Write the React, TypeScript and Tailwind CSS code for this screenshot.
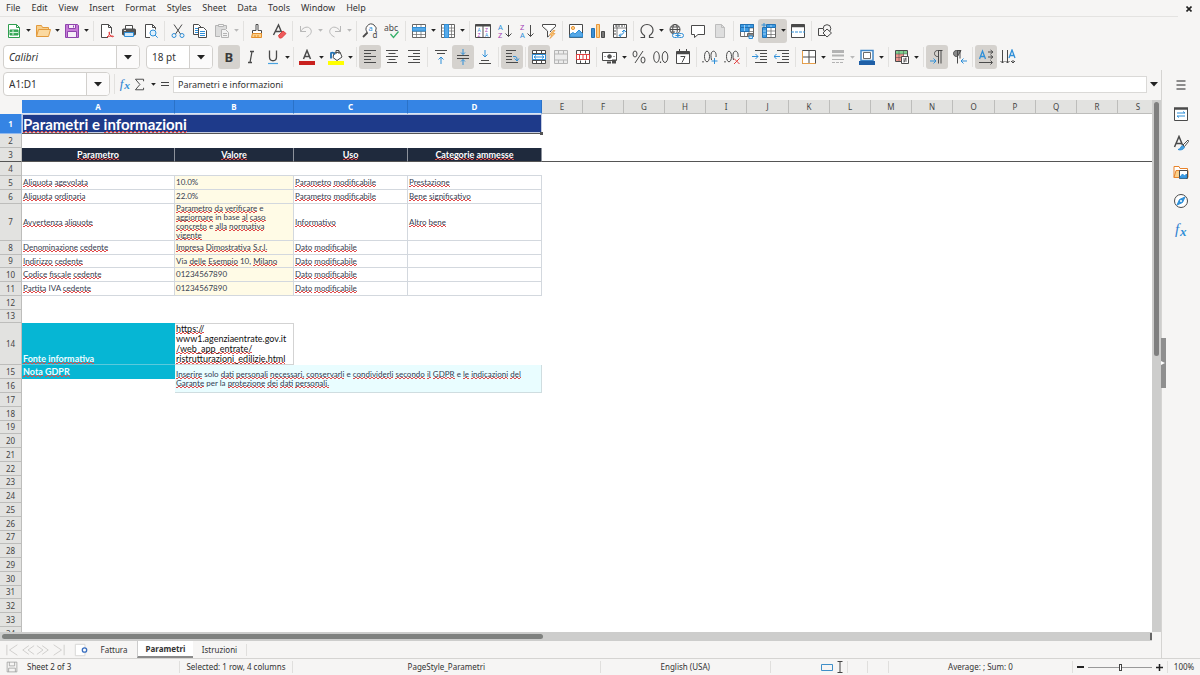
import React from "react";

const INK = "#4a4a4a";
const BLUE = "#2f8fd8";
const RED = "#e04040";

function Svg({ children, size = "size-4", stroke = INK }: { children: React.ReactNode; size?: string; stroke?: string }) {
  return (
    <svg viewBox="0 0 16 16" className={"shrink-0 " + size} fill="none" stroke={stroke} strokeWidth="1" aria-hidden="true">
      {children}
    </svg>
  );
}

function Caret({ faded = false, large = false }: { faded?: boolean; large?: boolean }) {
  return (
    <svg viewBox="0 0 8 5" className={large ? "h-[5px] w-2" : "h-[3px] w-[5px]"} fill={faded ? "#b9b9b9" : "#222"} aria-hidden="true">
      <path d="M0 0h8L4 4.6z" />
    </svg>
  );
}

function Sep({ wide = false }: { wide?: boolean }) {
  return (
    <span className={"flex shrink-0 justify-center " + (wide ? "w-[6px]" : "w-[5px]")}>
      <span className="h-5 w-px bg-[#e2e1df]" />
    </span>
  );
}

function Tool({ label, on = false, menu = false, faded = false, children }: {
  label: string; on?: boolean; menu?: boolean; faded?: boolean; children: React.ReactNode;
}) {
  return (
    <span className={"flex h-6 shrink-0 items-center rounded-[3px] " + (on ? "bg-[#d5d2ce]" : "")}>
      <button type="button" aria-label={label} aria-pressed={on} className="flex h-6 w-[22px] items-center justify-center">
        {children}
      </button>
      {menu && (
        <button type="button" aria-label={label + " menu"} className="flex h-6 w-[7px] items-center justify-center">
          <Caret faded={faded} />
        </button>
      )}
    </span>
  );
}

const page = "M3.5 1.5h6l3 3v10h-9z";
const T = ({ x, y, c, s = 7, children, i = false, b = false }: { x: number; y: number; c: string; s?: number; children: string; i?: boolean; b?: boolean }) => (
  <text x={x} y={y} fill={c} stroke="none" fontSize={s} fontFamily="Noto Sans, sans-serif" fontStyle={i ? "italic" : "normal"} fontWeight={b ? 700 : 400}>{children}</text>
);

const icons: Record<string, React.ReactNode> = {
  new: <Svg stroke="#2f9e4f"><path d="M2.500 1.500h8l3 3v10h-11z" fill="#fff" /><path d="M10.500 1.500v3h3" /><path d="M4 7h8v5H4z" fill="#3fae5f" /><path d="M4 9.500h8M7 7v5" stroke="#d5f2dc" /></Svg>,
  open: <Svg stroke="#e39a3c"><path d="M1.500 13.500v-11h5l1 2h6v2" fill="#f7cf8c" /><path d="M1.500 13.500l2-7h12l-2 7z" fill="#fbd9a0" /></Svg>,
  save: <Svg stroke="#8e44ad"><path d="M1.500 1.500h12l1 1v12h-13z" fill="#c77bd8" /><path d="M4.500 1.500h7v4h-7zM3.500 8.500h9v6h-9z" fill="#f6eef8" /><path d="M9.500 2.500v2" /></Svg>,
  pdf: <Svg><path d="M9 14.500H2.500v-13h7l3 3v6" fill="#fff" /><path d="M9.500 1.500v3h3" /><path d="M8 14c2.500-1.500 3-4.500 2.500-5s-1 1 .5 3 3 2 3.500 1.500-2-1-6.500.5z" stroke="#e23b3b" /></Svg>,
  print: <Svg><path d="M4.500 6V2.500h7V6" fill="#fff" /><rect x="1.500" y="6" width="13" height="6" rx="1" fill="#555" /><path d="M3.500 9.500h9v4h-9z" fill="#d3e9fa" stroke={BLUE} /><path d="M3 7.500h2" stroke="#ddd" /></Svg>,
  preview: <Svg><path d="M7 14.500H2.500v-13h7l3 3v2" fill="#fff" /><path d="M9.500 1.500v3h3" /><circle cx="10" cy="10" r="3" fill="#dff0fc" stroke={BLUE} /><path d="M12.200 12.200l2.500 2.500" stroke={BLUE} /></Svg>,
  cut: <Svg><path d="M4 1.500l6.500 9.500M12 1.500L5.500 11" /><circle cx="4" cy="12.500" r="2" stroke={BLUE} /><circle cx="12" cy="12.500" r="2" stroke={BLUE} /></Svg>,
  copy: <Svg><path d="M1.500 1.500h5l3 3v7h-8z" fill="#fff" /><path d="M3 5.500h4M3 7.500h4M3 9.500h4" stroke={BLUE} /><path d="M6.500 4.500h5l3 3v7h-8z" fill="#fff" /><path d="M8 8.500h5M8 10.500h5M8 12.500h5" stroke={BLUE} /></Svg>,
  paste: <Svg stroke="#b4b4b4"><path d="M6 13.500H1.500v-11h11V6" fill="#dcdcdc" /><path d="M4.500 1.500h5v2h-5z" fill="#f5f5f5" /><path d="M7.500 6.500h4l3 3v5h-7z" fill="#f3f3f3" /><path d="M9 10.500h4M9 12.500h4" /></Svg>,
  clone: <Svg><path d="M7 1.500h2v6h3.500v3h-9v-3H7z" fill="#fff" /><path d="M3.500 10.500h9v4h-10z" fill="#fbd08a" stroke="#e58e2a" /><path d="M6 14v-2M9 14v-2" stroke="#e58e2a" /></Svg>,
  clear: <Svg><path d="M2.500 12L7.500 2l3 7M4.500 8.500h5" strokeWidth="1.400" /><path d="M7.500 12.500l4.500-4.500 3 2.500-4.500 4.500h-2z" fill="#ee5b5b" stroke={RED} /></Svg>,
  undo: <Svg stroke="#b8b8b8"><path d="M2.500 3v5.500H8M2.500 8.500c3-5 8-5.500 10-2.500s0 6-4 8" /></Svg>,
  redo: <Svg stroke="#b8b8b8"><path d="M13.500 3v5.500H8M13.500 8.500c-3-5-8-5.500-10-2.500s0 6 4 8" /></Svg>,
  find: <Svg><path d="M5.500 9.500a5 5 0 1 1 8-1" fill="#fff" /><path d="M5.500 9.500L1 14" strokeWidth="1.800" /><T x={6.500} y={8} c={BLUE} s={7.500}>a</T><T x={10.500} y={15} c={INK} s={8}>d</T></Svg>,
  spell: <Svg><T x={0} y={7.500} c={INK} s={8.500}>abc</T><path d="M6.500 11l3 3.500 5-6" stroke="#35b06a" strokeWidth="1.300" /></Svg>,
  row: <Svg stroke="#666"><path d="M1.500 1.500h13v13h-13z" fill="#fff" /><path d="M5.500 1.500v13M10 1.500v13M1.500 11.500h13M1.500 8.500h13" strokeWidth=".7" /><path d="M1.500 4.500h13v3.500h-13z" fill="#56a9e8" stroke={BLUE} /></Svg>,
  col: <Svg stroke="#666"><path d="M1.500 1.500h13v13h-13z" fill="#fff" /><path d="M1.500 5h13M1.500 8h13M1.500 11.500h13M11.500 1.500v13" strokeWidth=".7" /><path d="M4.500 1.500h4v13h-4z" fill="#56a9e8" stroke={BLUE} /></Svg>,
  sort: <Svg><path d="M.5 1.500h15v13H.5zM8 1.500v13" fill="#fff" /><path d="M.5 2.500h15" strokeWidth="2" /><T x={2.500} y={8.500} c={BLUE} s={5}>A</T><T x={10} y={8.500} c="#a33fb5" s={5}>Z</T><T x={2.500} y={14} c="#a33fb5" s={5}>Z</T><T x={10} y={14} c={BLUE} s={5}>A</T></Svg>,
  asc: <Svg><T x={1} y={7} c={BLUE} s={7.500}>A</T><T x={1} y={15} c="#a33fb5" s={7.500}>Z</T><path d="M11.500 2v11.500M8.500 10.500l3 3 3-3" /></Svg>,
  desc: <Svg><T x={1} y={7} c="#a33fb5" s={7.500}>Z</T><T x={1} y={15} c={BLUE} s={7.500}>A</T><path d="M11.500 2v11.500M8.500 10.500l3 3 3-3" /></Svg>,
  filter: <Svg><path d="M1.500 1.500h13v2L9.500 8v1M1.500 1.500v2L6.500 8v6l2-1.500" fill="#fff" /><path d="M12 7.500L8.500 12h2.500L9 15.500l5-5h-2.500l2.500-3z" fill="#fbc777" stroke="#e8963a" strokeWidth=".7" /></Svg>,
  image: <Svg><path d="M1.500 1.500h13v13h-13z" fill="#fff" /><circle cx="5" cy="5" r="1.600" fill="#fbd08a" stroke="#e8963a" /><path d="M2 14v-2.500l3-2 2 1.500 4-4 3.500 3.500V14z" fill="#56a9e8" stroke={BLUE} /></Svg>,
  chart: <Svg><path d="M1.500 5.500h3v9h-3z" fill="#3b8fd4" stroke="#2272b5" /><path d="M6.500 1.500h3v13h-3z" fill="#fbd08a" stroke="#e8963a" /><path d="M11.500 8.500h3v6h-3z" fill="#777" /></Svg>,
  pivot: <Svg><path d="M1.500 1.500h13v13h-13z" fill="#fff" /><path d="M5 1.500v13M1.500 5h13" strokeWidth=".7" /><path d="M3 3h10M3 7v6" strokeDasharray="2 1" /><path d="M7 12.500c3 0 5-2 5-5M9 10.500l-2 2 2 1.500M10 9l2-2 2 2" stroke={BLUE} /></Svg>,
  omega: <Svg><path d="M1.500 14.500h4v-2C3 11 2 9.500 2 7c0-3 2.500-5.500 6-5.500S14 4 14 7c0 2.500-1 4-3.500 5.500v2h4" strokeWidth="1.200" /></Svg>,
  link: <Svg><circle cx="7" cy="6.500" r="5" /><ellipse cx="7" cy="6.500" rx="2.300" ry="5" /><path d="M2 6.500h10M3 4h8M3 9h4" /><rect x="4.500" y="10.500" width="6" height="4" rx="2" fill="#f6f5f4" stroke={BLUE} /><rect x="9.500" y="10.500" width="6" height="4" rx="2" fill="#f6f5f4" stroke={BLUE} /><path d="M7.500 12.500h5" stroke={BLUE} /></Svg>,
  comment: <Svg><path d="M1.500 2.500h13v9H8l-3.500 3v-3h-3z" fill="#fff" /></Svg>,
  header: <Svg stroke="#bdbdbd"><path d={page} fill="#dedede" /><path d="M9.500 1.500v3h3" /></Svg>,
  printarea: <Svg stroke="#666"><path d="M1.500 1.500h13v12h-13z" fill="#fff" /><path d="M1.500 5h13M1.500 8.500h13M5.500 1.500v12M10 1.500v12" strokeWidth=".7" /><path d="M1.500 1.500h13v3h-13zM1.500 4.500h8.500v4H1.500z" fill="#3d9be4" stroke="#2272b5" /><path d="M5.500 2v6M10 2v2" stroke="#cfe6f8" strokeWidth=".7" /><path d="M8.500 10.500h6v3h-6z" fill="#888" /><path d="M10 13h3.500v2.500H10z" fill="#d3e9fa" stroke={BLUE} /></Svg>,
  freeze: <Svg stroke="#666"><path d="M5.500 4.500h9v10h-9z" fill="#fff" /><path d="M5.500 8h9M5.500 11.500h9M10 4.500v10" strokeWidth=".7" /><path d="M5.500 1.500h9v3h-9zM1.500 4.500h4v10h-4z" fill="#3d9be4" stroke="#2272b5" /><path d="M2 8h3M2 11h3M10 2v2" stroke="#cfe6f8" strokeWidth=".7" /><path d="M3 0v4M.5 2H5" stroke={BLUE} /></Svg>,
  split: <Svg><path d="M1.500 1.500h13v13h-13z" fill="#fff" /><path d="M1 3h14" strokeWidth="2.500" /><path d="M1 9h14" stroke={BLUE} strokeDasharray="3 1" /></Svg>,
  shapes: <Svg><path d="M1.500 5.500h8v7h-8z" /><circle cx="10" cy="5.500" r="3.800" fill="#f6f5f4" /><path d="M10 6l4.500 4-4.500 4-4-4z" fill="#f6f5f4" /></Svg>,
  bold: <Svg><T x={3.500} y={12.500} c="#3a3a3a" s={13} b>B</T></Svg>,
  italic: <Svg><path d="M7 2.500h4M5 13.500h4M9 2.500l-2 11" strokeWidth="1.300" /></Svg>,
  underline: <Svg><path d="M4.500 1.500V8c0 5 7 5 7 0V1.500" strokeWidth="1.300" /><path d="M3 14.500h10" stroke="#4aa3e0" strokeWidth="1.200" /></Svg>,
  fontcolor: <Svg><path d="M4.500 10L8 1.500l3.500 8.500M5.500 7.500h5" strokeWidth="1.500" /><path d="M0 14h16" stroke="#c9211e" strokeWidth="4" /></Svg>,
  highlight: <Svg><path d="M6 4l6-1 2 5-5 3.500-4-3z" fill="#fff" /><path d="M8 5V1.500h3V5" /><path d="M3 9.500V4c2-1 3 0 4 1.500" stroke="#2272b5" strokeWidth="1.800" /><path d="M0 14h16" stroke="#ffff00" strokeWidth="4" /></Svg>,
  left: <Svg><path d="M2 1.500h12M2 4.500h7M2 7.500h12M2 10.500h7M2 13.500h12" /></Svg>,
  center: <Svg><path d="M2 1.500h12M4.500 4.500h7M2 7.500h12M4.500 10.500h7M3 13.500h10" /></Svg>,
  right: <Svg><path d="M2 1.500h12M7 4.500h7M2 7.500h12M7 10.500h7M2 13.500h12" /></Svg>,
  top: <Svg><path d="M2 1.500h12M4 4.500h8" /><path d="M8 15V8M5.500 10.500L8 8l2.500 2.500" stroke={BLUE} /></Svg>,
  middle: <Svg><path d="M2 6.500h12M2 9.500h12" /><path d="M8 0v5.500M6 3.500l2 2 2-2M8 16v-5.500M6 12.500l2-2 2 2" stroke={BLUE} /></Svg>,
  bottom: <Svg><path d="M2 14.500h12M4 11.500h8" /><path d="M8 1v7M5.500 5.500L8 8l2.500-2.500" stroke={BLUE} /></Svg>,
  wrap: <Svg><path d="M2 1.500h10M2 4.500h6M2 7.500h6M2 10.500h6M2 13.500h12" /><path d="M9 7.500h2c2 0 2 2 2 4M10.500 9.500l2.500 2.500 2-2.500" stroke={BLUE} /></Svg>,
  merge: <Svg><path d="M1.500 1.500h13v13h-13zM1.500 4.500h13M1.500 11.500h13M5.500 1.500v3M10.500 1.500v3M5.500 11.500v3M10.500 11.500v3" fill="#fff" /><path d="M1.500 5.500h13v5h-13z" fill="#fff" stroke={BLUE} /><path d="M3 8h10M5 6.500L3 8l2 1.500M11 6.500L13 8l-2 1.500" stroke={BLUE} /></Svg>,
  mergec: <Svg stroke="#b5b5b5"><path d="M1.500 1.500h13v13h-13zM1.500 5h13M1.500 11h13M5.500 1.500V5M10.500 1.500V5M5.500 11v3.500M10.500 11v3.500" fill="#ececec" /></Svg>,
  unmerge: <Svg><path d="M1.500 1.500h13v13h-13zM5.500 1.500v3M10.500 1.500v3M5.500 11.500v3M10.500 11.500v3" fill="#fff" /><path d="M1.500 5.500h13v5h-13zM4.500 5.500v5M8 5.500v5M11.500 5.500v5" stroke={RED} /></Svg>,
  currency: <Svg><path d="M.5 3.500h14v8H.5z" fill="#fff" /><circle cx="7.500" cy="7.500" r="1.800" fill="#555" /><path d="M2.500 7.500h1M11.500 7.500h1" /><path d="M5 13.500h9M10 11.500h5" strokeWidth="2" strokeDasharray="4 1" /></Svg>,
  percent: <Svg><ellipse cx="4" cy="5" rx="2" ry="3" /><ellipse cx="12" cy="11" rx="2" ry="3" /><path d="M12 2L4 14" /></Svg>,
  number: <Svg><ellipse cx="3.500" cy="8" rx="2.800" ry="5.500" /><path d="M7.500 12.500v1.500" strokeWidth="1.200" /><ellipse cx="12" cy="8" rx="2.800" ry="5.500" /></Svg>,
  date: <Svg><path d="M1.500 2.500h13v12h-13z" fill="#fff" /><path d="M1.500 4h13" strokeWidth="2.500" /><path d="M4.500 0v3M11.500 0v3" /><path d="M5.500 7.500h4.500l-3 6" /></Svg>,
  adddec: <Svg><path d="M1 12v1.500" strokeWidth="1.200" /><ellipse cx="5" cy="7.500" rx="2.500" ry="5.300" /><path d="M9.500 11C8 4 10 2.200 11.500 2.200S14.500 4 14 8" /><path d="M12.500 9v6M9.500 12h6" stroke={BLUE} /></Svg>,
  deldec: <Svg><path d="M1 12v1.500" strokeWidth="1.200" /><ellipse cx="5" cy="7.500" rx="2.500" ry="5.300" /><path d="M9.500 11C8 4 10 2.200 11.500 2.200S14.500 4 14 8" /><path d="M10 9.500l5.500 5.500M15.500 9.500L10 15" stroke={RED} /></Svg>,
  indent: <Svg><path d="M3 1.500h12M8 4.500h7M8 7.500h7M8 10.500h7M3 13.500h12" /><path d="M0 7.500h6M3.500 5L6 7.500 3.500 10" stroke={BLUE} /></Svg>,
  dedent: <Svg><path d="M3 1.500h12M8 4.500h7M8 7.500h7M8 10.500h7M3 13.500h12" /><path d="M0 7.500h6M2.500 5L0 7.500 2.500 10" stroke={BLUE} /></Svg>,
  borders: <Svg><path d="M1.500 1.500h13v13h-13zM1.500 8h13M8 1.500v13" fill="#fff" /><path d="M1.500 2v12.500h13" stroke="#e8a04a" /></Svg>,
  linestyle: <Svg stroke="#b3b3b3"><path d="M2 2.500h12" strokeWidth="3" /><path d="M2 6.500h12" strokeWidth="2" /><path d="M2 10.500h12" /><path d="M2 13.500h12" strokeDasharray="3 1" /></Svg>,
  bordercolor: <Svg stroke="#3f86c8"><path d="M2 1.500h12v10H2z" fill="#fff" strokeWidth="1.500" /><path d="M4.500 3.500h7v6h-7z" stroke="#6a6a6a" /><path d="M0 14h16" stroke="#1f5fa6" strokeWidth="4" /></Svg>,
  cond: <Svg><path d="M1.500 1.500h12v11h-12z" fill="#fff" /><path d="M2 2h11v3H2z" fill="#7fd08f" stroke="none" /><path d="M2 5h8v7H2z" fill="#f0968e" stroke="none" /><path d="M1.500 5h12M1.500 8.500h12M5 1.500v11M9.500 1.500v11" strokeWidth=".5" /><path d="M7.500 7.500h7v7h-7z" fill="#fff" /><path d="M9 10h4M9 12h4M12 8.500l-2 5" strokeWidth=".8" /></Svg>,
  ltr: <Svg><path d="M13.500 1.500H8.500c-4 0-4 6 0 6h1M9.500 1.500v13M12 1.500v13" /><path d="M1 12h6M4.500 9.500L7 12l-2.500 2.500" stroke={BLUE} /></Svg>,
  rtl: <Svg><path d="M10 1.500H5.500c-4 0-4 6 0 6h1z" fill="#888" /><path d="M6.500 1.500v13M9 1.500v8" /><path d="M10 12h6M12.500 9.500L10 12l2.500 2.500" stroke={BLUE} /></Svg>,
  texth: <Svg><path d="M1.500 10l3-8 3 8M2.500 7.500h4" stroke={BLUE} strokeWidth="1.300" /><path d="M10 3h4M12.500 1L15 3l-2.500 2M10 8h4M12.500 6L15 8l-2.500 2M1 13.500h13M12.500 11.500l2 2-2 2" /></Svg>,
  textv: <Svg><path d="M9 9l3-8 3 8M10 6.500h4" stroke={BLUE} strokeWidth="1.300" /><path d="M2.500 1v13M.5 12l2 2 2-2M7.500 1v13M5.500 12l2 2 2-2M13 11v3M11 12l2 2 2-2" /></Svg>,
};

type Item = "|" | "||" | [string, string, string?];
const standard: Item[] = [
  ["new", "New", "m"], ["open", "Open", "m"], ["save", "Save", "m"], "||",
  ["pdf", "Export as PDF"], ["print", "Print"], ["preview", "Print preview"], "|",
  ["cut", "Cut"], ["copy", "Copy"], ["paste", "Paste", "f"], "||",
  ["clone", "Clone formatting"], ["clear", "Clear formatting"], "|",
  ["undo", "Undo", "f"], ["redo", "Redo", "f"], "||",
  ["find", "Find and replace"], ["spell", "Spelling"], "|",
  ["row", "Row", "m"], ["col", "Column", "m"], "||",
  ["sort", "Sort"], ["asc", "Sort ascending"], ["desc", "Sort descending"], ["filter", "AutoFilter"], "|",
  ["image", "Insert image"], ["chart", "Insert chart"], ["pivot", "Pivot table"], "|",
  ["omega", "Special character", "m"], ["link", "Hyperlink"], ["comment", "Comment"], ["header", "Headers and footers"], "|",
  ["printarea", "Print area"], ["freeze", "Freeze rows and columns", "om"], ["split", "Split window"], "|",
  ["shapes", "Draw functions"],
];
const formatting: Item[] = [
  ["bold", "Bold", "o"], ["italic", "Italic"], ["underline", "Underline", "m"], "|",
  ["fontcolor", "Font color", "m"], ["highlight", "Background color", "m"], "|",
  ["left", "Align left", "o"], ["center", "Align center"], ["right", "Align right"], "|",
  ["top", "Align top"], ["middle", "Center vertically", "o"], ["bottom", "Align bottom"], "|",
  ["wrap", "Wrap text", "o"], "|",
  ["merge", "Merge and center", "o"], ["mergec", "Merge cells"], ["unmerge", "Unmerge cells"], "|",
  ["currency", "Currency", "m"], ["percent", "Percent"], ["number", "Number"], ["date", "Date"], "|",
  ["adddec", "Add decimal place"], ["deldec", "Delete decimal place"], "||",
  ["indent", "Increase indent"], ["dedent", "Decrease indent"], "|",
  ["borders", "Borders", "m"], ["linestyle", "Border style", "f"], ["bordercolor", "Border color", "m"], "||",
  ["cond", "Conditional formatting", "m"], "||",
  ["ltr", "Left to right", "o"], ["rtl", "Right to left"], "|",
  ["texth", "Text direction horizontal", "o"], ["textv", "Text direction vertical"],
];

function Tools({ items }: { items: Item[] }) {
  return (
    <>
      {items.map((it, i) =>
        typeof it === "string" ? <Sep key={i} wide={it === "||"} /> : (
          <Tool key={i} label={it[1]} on={!!it[2]?.includes("o")} menu={!!it[2] && /[mf]/.test(it[2])} faded={!!it[2]?.includes("f")}>
            {icons[it[0]]}
          </Tool>
        )
      )}
    </>
  );
}

function Combo({ label, value, box, italic = false }: { label: string; value: string; box: string; italic?: boolean }) {
  return (
    <span className={"flex h-6 shrink-0 overflow-hidden rounded-[4px] border border-[#d2d0cd] bg-white " + box}>
      <input aria-label={label} defaultValue={value} className={"min-w-0 flex-1 bg-transparent pl-[5px] text-[10px] outline-none " + (italic ? "italic" : "")} />
      <button type="button" aria-label={label + " list"} className="flex w-[23px] items-center justify-center border-l border-[#d2d0cd] bg-[#fbfafa]">
        <Caret large />
      </button>
    </span>
  );
}

const plain = new Set(["e", "in", "base", "solo", "per", "la", "Via", "10,", "IVA", "10.0%", "22.0%", "01234567890", "www1.agenziaentrate.gov.it"]);

/* Two offset dashed rows, one pixel each, form the spell-check zigzag. */
const zigzag =
  "bg-[linear-gradient(90deg,#e04a4a_50%,transparent_50%),linear-gradient(90deg,transparent_50%,#e04a4a_50%)] bg-[length:4px_1px] bg-[position:0_100%,0_calc(100%-1px)] bg-repeat-x";

function Words({ text }: { text: string }) {
  return (
    <>
      {text.split("\n").map((line, l) => (
        <span key={l} className="block whitespace-nowrap">
          {line.split(" ").map((w, i) => (
            <React.Fragment key={i}>
              {i > 0 && " "}
              {plain.has(w) ? w : <span className={zigzag}>{w}</span>}
            </React.Fragment>
          ))}
        </span>
      ))}
    </>
  );
}

const letters = "ABCDEFGHIJKLMNOPQRS".split("");
const colWidths = [153, 119, 114, 134, 41, 41, 41, 41, 41, 42, 41, 41, 41, 41, 42, 41, 41, 41, 41];
const data: Record<number, string[]> = {
  5: ["Aliquota agevolata", "10.0%", "Parametro modificabile", "Prestazione"],
  6: ["Aliquota ordinaria", "22.0%", "Parametro modificabile", "Bene significativo"],
  7: ["Avvertenza aliquote", "Parametro da verificare e\naggiornare in base al caso\nconcreto e alla normativa\nvigente", "Informativo", "Altro bene"],
  8: ["Denominazione cedente", "Impresa Dimostrativa S.r.l.", "Dato modificabile", ""],
  9: ["Indirizzo cedente", "Via delle Esempio 10, Milano", "Dato modificabile", ""],
  10: ["Codice fiscale cedente", "01234567890", "Dato modificabile", ""],
  11: ["Partita IVA cedente", "01234567890", "Dato modificabile", ""],
};

function rowHeight(n: number) {
  if (n === 1) return "h-5";
  if (n === 7) return "h-9";
  if (n === 14) return "h-[42px]";
  return [9, 13, 19, 23, 27, 31].includes(n) ? "h-[13px]" : "h-[14px]";
}

const lato = "font-['Lato',sans-serif] ";

function RowCells({ n }: { n: number }) {
  if (n === 1)
    return (
      <td colSpan={4} className={lato + "relative border-b border-b-[#555] bg-[#1e3a8a] pl-px align-middle text-[15px] leading-4 font-bold text-white shadow-[inset_0_0_0_1px_#c3cbe0]"}>
        <Words text="Parametri e informazioni" />
        <span className="absolute -right-px -bottom-0.5 size-[3px] bg-[#555]" />
      </td>
    );
  if (n === 3)
    return (
      <>
        {["Parametro", "Valore", "Uso", "Categorie ammesse"].map((h) => (
          <th key={h} scope="col" className={lato + "border-r border-b border-r-[#8c929c] border-b-[#555] bg-[#1f2a3d] text-[9px] leading-[9px] font-bold text-white"}>
            <Words text={h} />
          </th>
        ))}
      </>
    );
  if (data[n])
    return (
      <>
        {data[n].map((v, i) => (
          <td key={i} className={lato + "overflow-hidden border-r border-b border-[#d3d8de] pl-px align-middle text-[8px] leading-[9px] text-[#374151] " + (i === 1 ? "bg-[#fffbe6]" : "")}>
            {v && <Words text={v} />}
          </td>
        ))}
      </>
    );
  if (n === 14)
    return (
      <>
        <th scope="row" className={lato + "border-b border-b-[#5bc9dc] bg-[#06b6d4] pl-px text-left align-bottom text-[9px] leading-[10px] font-bold text-[#eefcff]"}><Words text="Fonte informativa" /></th>
        <td className={lato + "border border-l-0 border-[#d3d3d3] pl-px align-bottom text-[9px] leading-[10px] text-[#111]"}>
          <Words text={"https://\nwww1.agenziaentrate.gov.it\n/web_app_entrate/\nristrutturazioni_edilizie.html"} />
        </td>
      </>
    );
  if (n === 15)
    return (
      <>
        <th scope="row" className={lato + "bg-[#06b6d4] pl-px text-left align-middle text-[9px] leading-[10px] font-bold text-[#eefcff]"}><Words text="Nota GDPR" /></th>
        <td colSpan={3} rowSpan={2} className={lato + "border-r border-b border-[#cfdde0] bg-[#e9fdff] pl-px align-middle text-[8px] leading-[9px] text-[#334155]"}>
          <Words text={"Inserire solo dati personali necessari, conservarli e condividerli secondo il GDPR e le indicazioni del\nGarante per la protezione dei dati personali."} />
        </td>
      </>
    );
  return <td colSpan={n === 16 ? 1 : 4} className={n === 4 ? "border-b border-[#d3d8de]" : ""} />;
}

function Sheet() {
  return (
    <table className="w-[1159px] table-fixed border-separate border-spacing-0 bg-white">
      <colgroup>
        <col style={{ width: 22 }} />
        {colWidths.map((w, i) => <col key={i} style={{ width: w }} />)}
      </colgroup>
      <thead>
        <tr className="h-[14px] text-[8px] leading-[12px]">
          <td className="bg-[#f6f5f4]" />
          {letters.map((c, i) => (
            <th key={c} scope="col" className={"border-r border-b p-0 " + (i < 4 ? "border-r-[#2a72c8] border-b-[#d8e6f8] bg-[#3584e4] font-bold text-white" : "border-[#bdbdbb] bg-[#e2e2e0] font-normal text-[#444]")}>{c}</th>
          ))}
        </tr>
      </thead>
      <tbody>
        {Array.from({ length: 34 }, (_, i) => i + 1).map((n) => (
          <tr key={n} className={rowHeight(n)}>
            <th scope="row" className={"border-r border-b p-0 text-[8px] leading-[10px] " + (n === 1 ? "border-[#8fb8ee] bg-[#3584e4] font-bold text-white" : "bg-[#e2e2e0] font-normal text-[#444] " + (n === 3 ? "border-r-[#bdbdbb] border-b-[#555]" : "border-[#bdbdbb]"))}>{n}</th>
            <RowCells n={n} />
            <td colSpan={n === 14 ? 17 : 15} className={n === 3 ? "border-b border-[#555]" : ""} />
          </tr>
        ))}
      </tbody>
    </table>
  );
}

const Fx = ({ size }: { size: string }) => (
  <svg viewBox="0 0 16 16" className={size} aria-hidden="true">
    <text x="2" y="12" fontSize="15" fontStyle="italic" fontFamily="Liberation Serif, serif" fill="#2f7fd0">f</text>
    <text x="7" y="14" fontSize="13" fontStyle="italic" fontFamily="Liberation Serif, serif" fill="#2f8fd8" fontWeight="700">x</text>
  </svg>
);

const StatusSep = () => <span className="h-3 w-px shrink-0 bg-[#e0dfdd]" />;

export default function App() {
  return (
    <div className="flex h-screen flex-col overflow-hidden bg-[#f6f5f4] font-['Noto_Sans',sans-serif] text-[9px] text-[#333]">
      <header className="shrink-0">
        <div className="flex h-[17px] items-center justify-between">
          <nav className="flex h-full flex-1 items-center gap-[11px] border-b border-[#e4e3e1] pl-[6px]">
            {["File", "Edit", "View", "Insert", "Format", "Styles", "Sheet", "Data", "Tools", "Window", "Help"].map((m) => (
              <button key={m} type="button">{m}</button>
            ))}
          </nav>
          <button type="button" aria-label="Close document" className="flex w-[22px] justify-start pl-[8px]">
            <svg viewBox="0 0 6 6" className="size-[6px]" stroke="#222" strokeWidth="1.600" aria-hidden="true"><path d="M.5.5l5 5M5.500.5l-5 5" /></svg>
          </button>
        </div>
        <div className="flex h-[27px] items-center pl-[3px]"><Tools items={standard} /></div>
        <div className="flex h-[26px] items-center pl-[3px]">
          <Combo label="Font name" value="Calibri" box="mr-[6px] w-[137px]" italic />
          <Combo label="Font size" value="18 pt" box="mr-[5px] w-[67px]" />
          <Tools items={formatting} />
        </div>
      </header>

      <div className="flex min-h-0 flex-1">
        <main className="flex min-w-0 flex-1 flex-col">
          <div className="flex h-[30px] shrink-0 items-center pb-[2px] pl-[3px]">
            <Combo label="Name box" value="A1:D1" box="mr-0.5 w-[107px]" />
            <Sep />
            <button type="button" aria-label="Function wizard" className="flex w-4 justify-center"><Fx size="size-[14px]" /></button>
            <button type="button" aria-label="Select function" className="flex w-[23px] items-center justify-between">
              <Svg size="size-[13px]"><path d="M13 4V1.500H3L8.500 8 3 14.500h10V12" strokeWidth="1.200" /></Svg>
              <Caret />
            </button>
            <button type="button" aria-label="Formula" className="flex w-[17px] flex-col items-end gap-[2px] pr-1"><span className="h-px w-2 bg-[#444]" /><span className="h-px w-2 bg-[#444]" /></button>
            <input aria-label="Input line" defaultValue="Parametri e informazioni" className="h-[17px] min-w-0 flex-1 border border-[#dad9d7] bg-white pl-1 outline-none" />
            <button type="button" aria-label="Expand formula bar" className="flex w-[14px] items-center justify-center"><Caret large /></button>
          </div>
          <div className="flex min-h-0 flex-1">
            <div className="min-w-0 flex-1 overflow-hidden"><Sheet /></div>
            <div className="flex w-[9px] shrink-0 flex-col items-center bg-[#cdcdcc] pt-0.5">
              <div className="h-[48%] w-[5px] rounded-full bg-[#7f7f7f]" />
            </div>
          </div>
          <div className="mr-[9px] flex h-[9px] shrink-0 items-center justify-between bg-[#cdcdcc] pl-0.5">
            <div className="h-[5px] w-[47%] rounded-full bg-[#7f817f]" />
            <div className="h-[7px] w-[2px] bg-[#666]" />
          </div>
          <div className="flex h-[17px] shrink-0 items-center text-[8px]">
            <div className="flex items-center pl-[6px]">
              {["M1 2v12M13 2L4 8l9 6", "M9 3L2 8l7 5M15 3L8 8l7 5", "M7 3l7 5-7 5M1 3l7 5-7 5", "M15 2v12M3 2l9 6-9 6"].map((d, i) => (
                <button key={i} type="button" aria-label={["First sheet", "Previous sheet", "Next sheet", "Last sheet"][i]} className="w-[15px]">
                  <Svg size="size-[14px]" stroke="#cbcac8"><path d={d} /></Svg>
                </button>
              ))}
            </div>
            <button type="button" aria-label="Add sheet" className="ml-2 w-[15px]">
              <Svg size="size-[14px]" stroke="#d5d4d2"><path d="M1.500 1.500h11v13h-11z" fill="#fff" /><circle cx="12" cy="8" r="2.500" fill="#fff" stroke="#3a6fc0" strokeWidth="1.500" /></Svg>
            </button>
            <button type="button" className="h-full w-[48px] pl-0.5">Fattura</button>
            <button type="button" className="h-full w-[56px] border-b-2 border-l border-b-[#8a8a8a] border-l-[#ccc] bg-white font-bold">Parametri</button>
            <button type="button" className="h-full w-[53px]">Istruzioni</button>
            <StatusSep />
          </div>
        </main>
        <aside className="relative flex w-[39px] shrink-0 flex-col items-center gap-[13px] border-l border-[#d5d4d2] pt-[7px]">
          <button type="button" aria-label="Sidebar settings"><Svg><path d="M3.500 4h9M3.500 8h9M3.500 12h9" stroke="#222" strokeWidth="1.200" /></Svg></button>
          <button type="button" aria-label="Properties"><Svg><path d="M1.500 2.500h13v12h-13z" fill="#fff" /><path d="M1 2.500h14" strokeWidth="2.500" /><path d="M4 7h8l-2-1.500M12 10H4l2 1.500" stroke={BLUE} /></Svg></button>
          <button type="button" aria-label="Styles"><Svg><path d="M1.500 12L6 1.500 9.500 10M3 8.500h6" strokeWidth="1.500" /><path d="M15 5l-5 5 1.500 1.500L15.500 6.500z" fill="#fff" /><path d="M5 14.500c3 0 2-3 4.500-4l2 2c-1 2-4 3-6.500 2z" fill="#4aa3e0" stroke={BLUE} /></Svg></button>
          <button type="button" aria-label="Gallery"><Svg><path d="M1 13.500v-11h5l1 2h7.500v2" stroke="#e8832a" fill="#fff" /><path d="M1 13.500l2-7h12v7z" fill="#fbd08a" stroke="#e8832a" /><path d="M6.500 6.500h8v8h-8z" fill="#fff" /><path d="M7 13l2.500-3 2 2 2-2v4H7z" fill="#3d9be4" stroke={BLUE} /></Svg></button>
          <button type="button" aria-label="Navigator"><Svg><circle cx="8" cy="8" r="6.500" fill="#fff" /><path d="M12 4L9.500 9.500 4 12l2.500-5.500z" fill="#2f8fd8" stroke={BLUE} /><circle cx="8" cy="8" r="1" fill="#fff" stroke="none" /></Svg></button>
          <button type="button" aria-label="Functions"><Fx size="size-4" /></button>
          <button type="button" aria-label="Collapse sidebar" className="absolute top-[268px] -left-px flex h-[50px] w-[5px] items-center bg-[#8f8f8f]">
            <svg viewBox="0 0 4 4" className="size-1" fill="#fff" aria-hidden="true"><path d="M0 0l4 2-4 2z" /></svg>
          </button>
        </aside>
      </div>

      <footer className="flex h-[17px] shrink-0 items-center border-t border-[#d5d4d2] text-[8px]">
        <span className="flex w-[27px] pl-[6px]"><Svg size="size-3" stroke="#999"><path d="M1.500 1.500h13v13h-13zM4.500 1.500v5h7v-5M3.500 14.500v-5h9v5" /></Svg></span>
        <span className="w-[152px]">Sheet 2 of 3</span>
        <StatusSep />
        <span className="w-[112px] text-center">Selected: 1 row, 4 columns</span>
        <StatusSep />
        <span className="flex-[308] text-center">PageStyle_Parametri</span>
        <StatusSep />
        <span className="flex-[170] text-center">English (USA)</span>
        <StatusSep />
        <span className="flex w-[76px] items-center justify-end gap-1 pr-1">
          <svg viewBox="0 0 12 8" className="h-2 w-3" fill="none" stroke="#3f8fc8" aria-hidden="true"><path d="M.5 1.500h11v6H.5z" /></svg>
          <svg viewBox="0 0 6 12" className="h-3 w-[6px]" fill="none" stroke="#444" aria-hidden="true"><path d="M.5.5h5M.5 11.500h5M3 .5v11" /></svg>
        </span>
        <StatusSep /><span className="w-[19px]" /><StatusSep /><span className="w-[20px]" /><StatusSep />
        <span className="flex-[184] text-center">Average: ; Sum: 0</span>
        <StatusSep />
        <span className="flex w-[94px] items-center justify-center gap-1">
          <button type="button" aria-label="Zoom out" className="flex h-2 w-[7px] items-center"><span className="h-[2px] w-full bg-[#222]" /></button>
          <input type="range" aria-label="Zoom" defaultValue={50} className="h-2 w-[64px] appearance-none bg-[linear-gradient(#999,#999)] bg-[length:100%_1px] bg-center bg-no-repeat [&::-webkit-slider-thumb]:h-[7px] [&::-webkit-slider-thumb]:w-[3px] [&::-webkit-slider-thumb]:appearance-none [&::-webkit-slider-thumb]:border [&::-webkit-slider-thumb]:border-[#444] [&::-webkit-slider-thumb]:bg-white" />
          <button type="button" aria-label="Zoom in" className="flex h-2 w-[7px] items-center"><svg viewBox="0 0 7 7" className="size-[7px]" stroke="#222" strokeWidth="1.500" aria-hidden="true"><path d="M0 3.500h7M3.500 0v7" /></svg></button>
        </span>
        <StatusSep />
        <span className="w-[32px] text-center">100%</span>
      </footer>
    </div>
  );
}
